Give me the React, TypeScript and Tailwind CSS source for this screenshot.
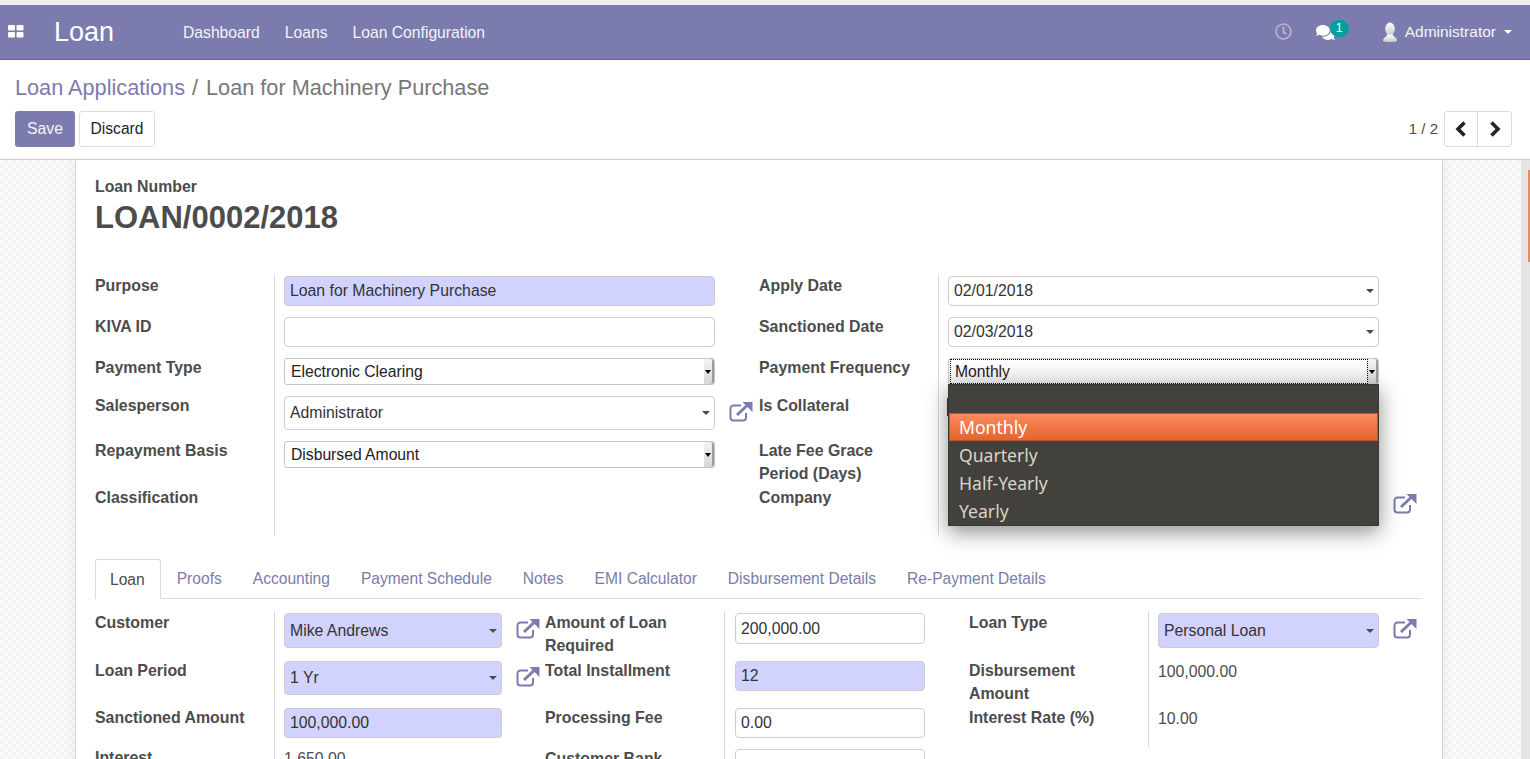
import React from 'react';
import { FaComments, FaRegClock } from 'react-icons/fa';

const topCols = 'grid grid-cols-[179px_441px_44px]';
const colA = 'grid grid-cols-[179px_228px_43px]';
const colB = 'grid grid-cols-[179px_201px_44px]';
const colC = 'grid grid-cols-[179px_231px_43px]';

const tabs = ['Proofs', 'Accounting', 'Payment Schedule', 'Notes', 'EMI Calculator', 'Disbursement Details', 'Re-Payment Details'];

const ExternalLink = () => (
  <svg viewBox="0 0 24 21" className="w-[24px] h-[21px] block" fill="none">
    <path d="M12 4.5H4.5A3 3 0 0 0 1.5 7.5V16.5A3 3 0 0 0 4.5 19.5H14A3 3 0 0 0 17 16.5V12" stroke="#7c7bad" strokeWidth="2" />
    <path d="M8 14L18 4.5" stroke="#7c7bad" strokeWidth="3" />
    <path d="M13.5 1H23.5V11Z" fill="#7c7bad" />
  </svg>
);

const Chevron = ({ points }: { points: string }) => (
  <svg viewBox="0 0 12 16" className="w-[12px] h-[16px]" fill="none">
    <polyline points={points} stroke="#212529" strokeWidth="3.6" />
  </svg>
);

const Caret = () => (
  <span className="w-0 h-0 border-x-[4px] border-x-transparent border-t-[4px] border-t-[#4c4c4c]" />
);

const Row = ({
  cols,
  height,
  label,
  children,
  icon,
  pad = 'pl-[9px]',
}: {
  cols: string;
  height: string;
  label: React.ReactNode;
  children?: React.ReactNode;
  icon?: boolean;
  pad?: string;
}) => (
  <div className={`${cols} ${height}`}>
    <div className="font-bold text-[15.9px] text-[#4c4c4c] leading-[23px] pr-2">{label}</div>
    <div className={`border-l border-[#d9d9d9] ${pad}`}>{children}</div>
    {icon && (
      <div className="pl-[14px] pt-[7px]">
        <ExternalLink />
      </div>
    )}
  </div>
);

const Input = ({ value, height = 'h-[30px]', required }: { value?: string; height?: string; required?: boolean }) => (
  <div
    className={`mt-[2px] ${height} border border-[#ccc] rounded-[4px] px-[5px] flex items-center text-[#333] ${
      required ? 'bg-[#d2d2ff]' : 'bg-white'
    }`}
  >
    {value}
  </div>
);

const Many2one = ({ value, height = 'h-[34px]', required }: { value: string; height?: string; required?: boolean }) => (
  <div
    className={`mt-[2px] ${height} border border-[#ccc] rounded-[4px] pl-[5px] pr-[4px] flex items-center justify-between text-[#333] ${
      required ? 'bg-[#d2d2ff]' : 'bg-white'
    }`}
  >
    <span>{value}</span>
    <Caret />
  </div>
);

const NativeSelect = ({ value, focused }: { value: string; focused?: boolean }) => (
  <div
    className={`mt-[2px] h-[27px] border border-[#c4c4c4] rounded-[3px] flex text-[#222] text-[15.7px] ${
      focused ? 'bg-gradient-to-b from-white to-[#eeeeee]' : 'bg-white'
    }`}
  >
    <div
      className={`flex-1 flex items-center ${focused ? 'ml-[1px] pl-[4px] border border-dotted border-black' : 'pl-[6px]'}`}
    >
      {value}
    </div>
    <div className="w-[10px] flex items-center justify-center bg-gradient-to-b from-[#f4f4f4] to-[#d6d6d6] border-r-2 border-[#9d9d9d] rounded-r-[3px]">
      <span className="w-0 h-0 border-x-[3.5px] border-x-transparent border-t-[4px] border-t-black" />
    </div>
  </div>
);

const Text = ({ children }: { children: React.ReactNode }) => (
  <div className="text-[#4c4c4c] leading-[23px] mt-[1px]">{children}</div>
);

const Avatar = () => (
  <svg viewBox="0 0 16 20" className="w-[16px] h-[20px]">
    <defs>
      <linearGradient id="avatarFill" x1="0" y1="0" x2="0" y2="1">
        <stop offset="0" stopColor="#ffffff" />
        <stop offset="1" stopColor="#c9c9c9" />
      </linearGradient>
    </defs>
    <ellipse cx="8" cy="7" rx="4.8" ry="6.5" fill="url(#avatarFill)" />
    <path d="M5 12.5C5 15 1 15.5 1 18.5C1 19.5 3 20 8 20C13 20 15 19.5 15 18.5C15 15.5 11 15 11 12.5Z" fill="url(#avatarFill)" />
  </svg>
);

export default function App() {
  return (
    <div className="h-[759px] overflow-hidden flex flex-col bg-white font-['Liberation_Sans',sans-serif] text-[15.8px]">
      <div className="h-[5px] bg-[#f0eeec]" />

      <header className="h-[55px] bg-[#7c7bad] border-b border-[#6a6996] flex items-center text-white">
        <svg viewBox="0 0 16 13" className="w-[16px] h-[13px] ml-[8px] -mt-[1px]" fill="#fff">
          <rect x="0" y="0" width="7" height="5.5" rx="1" />
          <rect x="8.5" y="0" width="7" height="5.5" rx="1" />
          <rect x="0" y="7" width="7" height="5.5" rx="1" />
          <rect x="8.5" y="7" width="7" height="5.5" rx="1" />
        </svg>
        <span className="ml-[30px] text-[27px] w-[129px]">Loan</span>
        <nav className="flex gap-[25px] text-[15.7px] text-[#f4f4fa] mt-[1px]">
          <span>Dashboard</span>
          <span>Loans</span>
          <span>Loan Configuration</span>
        </nav>
        <div className="ml-auto flex items-center pr-[19px]">
          <FaRegClock className="text-[#b7b6d2] text-[17px] -mt-[2px]" />
          <div className="relative ml-[24px] mr-[47px]">
            <FaComments className="text-white text-[19px]" />
            <span className="absolute -top-[3px] left-[14px] w-[19px] h-[17px] rounded-full bg-[#00a09d] text-[12px] flex items-center justify-center">
              1
            </span>
          </div>
          <Avatar />
          <span className="ml-[7px] text-[15.5px] text-[#f4f4fa]">Administrator</span>
          <span className="ml-[8px] mr-[-1px] w-0 h-0 border-x-[4px] border-x-transparent border-t-[4px] border-t-white" />
        </div>
      </header>

      <section className="h-[100px] border-b border-[#ccc] px-[15px] shrink-0">
        <div className="h-[51px] pt-[15px] text-[21.7px] leading-[26px] text-[#777]">
          <span className="text-[#7c7bad]">Loan Applications</span>
          <span className="ml-[7px] mr-[8px]">/</span>
          <span>Loan for Machinery Purchase</span>
        </div>
        <div className="flex items-center">
          <button className="w-[60px] h-[36px] bg-[#7c7bad] text-[#f4f4fa] rounded-[3px]">Save</button>
          <button className="ml-[4px] w-[76px] h-[36px] bg-white border border-[#dcdce6] rounded-[3px] text-[15.6px] text-[#212529]">
            Discard
          </button>
          <span className="ml-auto mr-[6px] text-[15px] text-[#4c4c4c]">1 / 2</span>
          <div className="flex h-[36px] mr-[3px] border border-[#dcdce6] rounded-[3px]">
            <div className="w-[33px] flex items-center justify-center border-r border-[#dcdce6]">
              <Chevron points="9.5,1.5 3,8 9.5,14.5" />
            </div>
            <div className="w-[33px] flex items-center justify-center">
              <Chevron points="2.5,1.5 9,8 2.5,14.5" />
            </div>
          </div>
        </div>
      </section>

      <main className="flex-1 min-h-0 flex overflow-hidden">
        <div className="flex-1 flex pl-[75px] bg-[repeating-conic-gradient(#f4f4f4_0_25%,#fcfcfc_0_50%)] bg-[length:8px_8px]">
          <div className="w-[1368px] h-[800px] bg-white border-x border-[#d4d4df] shadow-[0_0_14px_rgba(0,0,0,0.08)] pl-[19px] pr-[20px] pt-[15px]">
            <div className="font-bold text-[#4c4c4c] leading-[23px]">Loan Number</div>
            <h1 className="font-bold text-[31px] leading-[38px] text-[#4c4c4c] mt-[1px]">LOAN/0002/2018</h1>

            <div className="flex mt-[37px]">
              <div className="w-[664px]">
                <Row cols={topCols} height="h-[41px]" label="Purpose">
                  <Input value="Loan for Machinery Purchase" required />
                </Row>
                <Row cols={topCols} height="h-[41px]" label="KIVA ID">
                  <Input />
                </Row>
                <Row cols={topCols} height="h-[38px]" label="Payment Type">
                  <NativeSelect value="Electronic Clearing" />
                </Row>
                <Row cols={topCols} height="h-[45px]" label="Salesperson" icon>
                  <Many2one value="Administrator" />
                </Row>
                <Row cols={topCols} height="h-[47px]" label="Repayment Basis">
                  <NativeSelect value="Disbursed Amount" />
                </Row>
                <Row cols={topCols} height="h-[49px]" label="Classification" />
              </div>

              <div className="w-[664px]">
                <Row cols={topCols} height="h-[41px]" label="Apply Date">
                  <Many2one value="02/01/2018" height="h-[30px]" />
                </Row>
                <Row cols={topCols} height="h-[41px]" label="Sanctioned Date">
                  <Many2one value="02/03/2018" height="h-[30px]" />
                </Row>
                <Row cols={topCols} height="h-[38px]" label="Payment Frequency">
                  <div className="relative">
                    <NativeSelect value="Monthly" focused />
                    <div className="absolute left-0 top-[40px] w-[1px] h-[18px] -ml-[1px] bg-[#43413c]" />
                    <div className="absolute z-10 left-0 top-[26px] w-[431px] h-[142px] bg-[#43413c] border border-[#3a3834] shadow-[0_6px_20px_rgba(0,0,0,0.45)] font-['Noto_Sans',sans-serif] text-[17.6px] text-[#d8d4c9] leading-[28px]">
                      <div className="h-[28px]" />
                      <div className="h-[28px] px-[9px] bg-gradient-to-b from-[#fb8a5c] to-[#e4642f] border border-[#b9552a] text-white leading-[26px]">
                        Monthly
                      </div>
                      <div className="px-[10px]">Quarterly</div>
                      <div className="px-[10px]">Half-Yearly</div>
                      <div className="px-[10px]">Yearly</div>
                    </div>
                  </div>
                </Row>
                <Row cols={topCols} height="h-[45px]" label="Is Collateral" />
                <Row
                  cols={topCols}
                  height="h-[47px]"
                  label={
                    <>
                      Late Fee Grace
                      <br />
                      Period (Days)
                    </>
                  }
                />
                <Row cols={topCols} height="h-[49px]" label="Company" icon />
              </div>
            </div>

            <div className="flex h-[40px] mt-[24px] border-b border-[#dcdce6] gap-[1px] text-[15.6px]">
              <div className="h-[40px] pl-[14px] pr-[15px] leading-[39px] border border-b-0 border-[#dcdce6] bg-white rounded-t-[3px] text-[#4c4c4c]">
                Loan
              </div>
              {tabs.map((tab) => (
                <div key={tab} className="h-[39px] px-[15px] leading-[39px] text-[#7c7bad]">
                  {tab}
                </div>
              ))}
            </div>

            <div className="flex mt-[12px]">
              <div className="w-[450px]">
                <Row cols={colA} height="h-[48px]" label="Customer" icon>
                  <Many2one value="Mike Andrews" height="h-[35px]" required />
                </Row>
                <Row cols={colA} height="h-[47px]" label="Loan Period" icon>
                  <Many2one value="1 Yr" required />
                </Row>
                <Row cols={colA} height="h-[40px]" label="Sanctioned Amount">
                  <Input value="100,000.00" required />
                </Row>
                <Row cols={colA} height="h-[40px]" label="Interest">
                  <Text>1,650.00</Text>
                </Row>
              </div>
              <div className="w-[424px]">
                <Row cols={colB} height="h-[48px]" pad="pl-[10px]" label={<>Amount of Loan<br />Required</>}>
                  <Input value="200,000.00" height="h-[31px]" />
                </Row>
                <Row cols={colB} height="h-[47px]" pad="pl-[10px]" label="Total Installment">
                  <Input value="12" required />
                </Row>
                <Row cols={colB} height="h-[41px]" pad="pl-[10px]" label="Processing Fee">
                  <Input value="0.00" />
                </Row>
                <Row cols={colB} height="h-[40px]" pad="pl-[10px]" label="Customer Bank">
                  <Input />
                </Row>
              </div>
              <div className="w-[453px]">
                <Row cols={colC} height="h-[48px]" label="Loan Type" icon>
                  <Many2one value="Personal Loan" height="h-[35px]" required />
                </Row>
                <Row cols={colC} height="h-[47px]" label={<>Disbursement<br />Amount</>}>
                  <Text>100,000.00</Text>
                </Row>
                <Row cols={colC} height="h-[41px]" label="Interest Rate (%)">
                  <Text>10.00</Text>
                </Row>
              </div>
            </div>
          </div>
        </div>
        <div className="w-[9px] bg-[#e4e4e4] flex justify-end pt-[10px]">
          <div className="w-[2px] h-[92px] bg-[#ea8a60]" />
        </div>
      </main>
    </div>
  );
}
